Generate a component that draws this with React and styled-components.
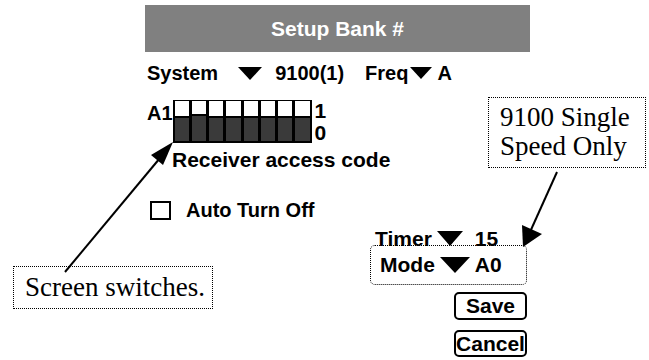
import React from 'react'
import styled, { createGlobalStyle } from 'styled-components'

const Global = createGlobalStyle`
  html, body {
    margin: 0;
    padding: 0;
    background: #fff;
  }
  body {
    font-family: "Liberation Sans", Arial, sans-serif;
    color: #000;
  }
`

const Page = styled.div`
  position: relative;
  width: 649px;
  height: 360px;
  overflow: hidden;
`

const Screen = styled.div`
  width: 385px;
  margin-left: 145px;
  padding-top: 5px;
  display: flex;
  flex-direction: column;
`

const Header = styled.div`
  height: 47px;
  background: #808080;
  color: #fff;
  font-weight: 700;
  font-size: 21px;
  display: flex;
  align-items: center;
  justify-content: center;
`

const Row = styled.div`
  display: flex;
  align-items: center;
  font-weight: 700;
  font-size: ${p => p.$fs || 20}px;
  line-height: ${p => p.$lh || 24}px;
  margin-top: ${p => p.$top || 0}px;
  padding-left: ${p => p.$left || 0}px;
`

const Label = styled.span`
  margin-left: ${p => p.$ml || 0}px;
`

const Tri = styled.span`
  display: inline-block;
  width: 0;
  height: 0;
  border-left: ${p => p.$w / 2}px solid transparent;
  border-right: ${p => p.$w / 2}px solid transparent;
  border-top: ${p => p.$h}px solid #000;
  margin-left: ${p => p.$ml || 0}px;
`

const SwitchArea = styled.div`
  display: flex;
  align-items: flex-start;
  margin-top: 16px;
  padding-left: 2px;
  font-weight: 700;
`

const Bank = styled.span`
  font-size: 20px;
  line-height: 20px;
  margin-top: 3px;
`

const Dip = styled.div`
  display: grid;
  grid-template-columns: repeat(8, 1fr);
  column-gap: 3px;
  width: 139px;
  height: 43px;
  box-sizing: border-box;
  background: #000;
  border: 2px solid #000;
  border-top-width: 1px;
`

const Sw = styled.div`
  display: flex;
  flex-direction: column;
`

const SwTop = styled.div`
  height: ${p => p.$h}px;
  background: #fff;
`

const SwBottom = styled.div`
  flex: 1;
  background: #3a3a3a;
  margin-top: 2px;
`

const Levels = styled.div`
  display: flex;
  flex-direction: column;
  margin-left: 3px;
  font-size: 21px;
  line-height: 22px;
`

const Check = styled.span`
  width: 17px;
  height: 15px;
  border: 2px solid #000;
  margin-left: 5px;
`

const Controls = styled.div`
  margin-left: 225px;
  width: 157px;
  margin-top: 9px;
  display: flex;
  flex-direction: column;
  font-weight: 700;
  font-size: 21px;
`

const ModeBox = styled.div`
  display: flex;
  align-items: center;
  height: 40px;
  box-sizing: border-box;
  border: 1px dotted #000;
  border-radius: 5px;
  padding-left: 9px;
  margin-top: -1px;
`

const Button = styled.div`
  align-self: flex-end;
  width: 73px;
  height: ${p => p.$h}px;
  box-sizing: border-box;
  border: 2px solid #000;
  border-radius: 5px;
  display: flex;
  align-items: center;
  justify-content: center;
  font-weight: 700;
  font-size: 21px;
  margin-top: ${p => p.$top}px;
`

const Note = styled.div`
  position: absolute;
  left: ${p => p.$x}px;
  top: ${p => p.$y}px;
  width: ${p => p.$w}px;
  height: ${p => p.$h}px;
  box-sizing: border-box;
  border: 1px dotted #000;
  padding: ${p => p.$pad};
  font-family: "Liberation Serif", "Times New Roman", serif;
  font-size: 27px;
  line-height: 29px;
  white-space: nowrap;
`

const Arrows = styled.svg`
  position: absolute;
  left: 0;
  top: 0;
  pointer-events: none;
`

const tops = [15, 13, 15, 15, 15, 15, 15, 15]

export default function App() {
  return (
    <Page>
      <Global />
      <Screen>
        <Header>Setup Bank #</Header>
        <Row $top={10} $left={2} $lh={22}>
          <Label>System</Label>
          <Tri $w={24} $h={13} $ml={20} />
          <Label $ml={13}>9100(1)</Label>
          <Label $ml={21}>Freq</Label>
          <Tri $w={22} $h={12} $ml={2} />
          <Label $ml={5}>A</Label>
        </Row>
        <SwitchArea>
          <Bank>A1</Bank>
          <Dip>
            {tops.map((h, i) => (
              <Sw key={i}>
                <SwTop $h={h} />
                <SwBottom />
              </Sw>
            ))}
          </Dip>
          <Levels>
            <span>1</span>
            <span>0</span>
          </Levels>
        </SwitchArea>
        <Row $top={4} $left={27} $fs={21}>Receiver access code</Row>
        <Row $top={26}>
          <Check />
          <Label $ml={15}>Auto Turn Off</Label>
        </Row>
        <Controls>
          <Row $left={5} $fs={21} $lh={12}>
            <span>Timer</span>
            <Tri $w={26} $h={15} $ml={5} />
            <Label $ml={12}>15</Label>
          </Row>
          <ModeBox>
            <span>Mode</span>
            <Tri $w={30} $h={16} $ml={5} />
            <Label $ml={5}>A0</Label>
          </ModeBox>
          <Button $h={28} $top={7}>Save</Button>
          <Button $h={27} $top={10}>Cancel</Button>
        </Controls>
      </Screen>

      <Note $x={488} $y={97} $w={158} $h={71} $pad="5px 0 0 11px">
        9100 Single<br />Speed Only
      </Note>
      <Note $x={13} $y={266} $w={200} $h={43} $pad="6px 0 0 11px">
        Screen switches.
      </Note>

      <Arrows width="649" height="360" viewBox="0 0 649 360">
        <line x1="65" y1="272" x2="160" y2="158" stroke="#000" strokeWidth="2" />
        <polygon points="173,142 151,155 163,165" fill="#000" />
        <line x1="557" y1="172" x2="530" y2="232" stroke="#000" strokeWidth="2" />
        <polygon points="523,247 522,225 542,234" fill="#000" />
      </Arrows>
    </Page>
  )
}
